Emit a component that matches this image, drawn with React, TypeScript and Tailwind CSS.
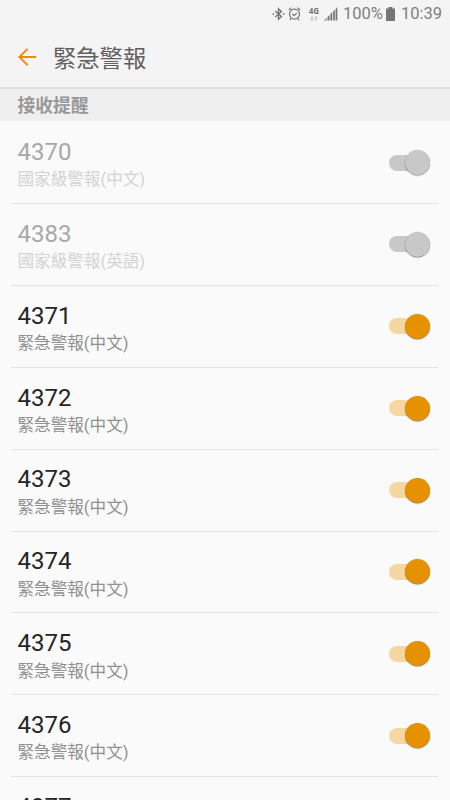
interface Channel {
    id: string;
    label: string;
    enabled: boolean;
}

const channels: Channel[] = [
    { id: '4370', label: '國家級警報(中文)', enabled: false },
    { id: '4383', label: '國家級警報(英語)', enabled: false },
    { id: '4371', label: '緊急警報(中文)', enabled: true },
    { id: '4372', label: '緊急警報(中文)', enabled: true },
    { id: '4373', label: '緊急警報(中文)', enabled: true },
    { id: '4374', label: '緊急警報(中文)', enabled: true },
    { id: '4375', label: '緊急警報(中文)', enabled: true },
    { id: '4376', label: '緊急警報(中文)', enabled: true },
    { id: '4377', label: '緊急警報(中文)', enabled: true },
];

function StatusBar() {
    return (
        <div className="flex h-7 shrink-0 items-center justify-end pr-[8px] text-[#757575]">
            <svg className="h-[14px] w-[13px]" viewBox="0 0 13 14" fill="none" stroke="currentColor" strokeWidth="1.4">
                <path d="M3.2 4 L9.4 9.6 L6.5 12.2 V1.8 L9.4 4.4 L3.2 10" />
                <path d="M0.5 7 H2.2 M10.8 7 H12.5" strokeWidth="1.5" />
            </svg>
            <svg className="ml-[3px] h-[14px] w-[13px]" viewBox="0 0 13 14" fill="none" stroke="currentColor" strokeWidth="1.2">
                <circle cx="6.5" cy="7.1" r="5" />
                <path d="M0.8 3 L3.4 0.8 M9.6 0.8 L12.2 3 M4.3 6.8 L6.2 8.6 L8.8 5.9 M3 11.3 L2.2 13.2 M10 11.3 L10.8 13.2" />
            </svg>
            <div className="ml-[7px] flex w-3 flex-col items-center">
                <span className="font-['Open_Sans',sans-serif] text-[8px] leading-[8px] font-bold">4G</span>
                <svg className="mt-px h-[5px] w-[8px]" viewBox="0 0 8 5" fill="none" stroke="#b8b8b8" strokeWidth="1">
                    <path d="M2 0 V4.3 M0.5 2.9 L2 4.4 L3.5 2.9 M6 5 V0.7 M4.5 2.1 L6 0.6 L7.5 2.1" />
                </svg>
            </div>
            <svg className="ml-[4px] h-[14px] w-[14px]" viewBox="0 0 14 14" fill="currentColor">
                <path d="M0 13.5 L2.5 11 V13.5 Z M3.5 10 L5.5 8 V13.5 H3.5 Z M6.4 7.1 L8.2 5.3 V13.5 H6.4 Z M9.1 4.4 L10.8 2.7 V13.5 H9.1 Z M11.6 1.9 L13.3 0.2 V13.5 H11.6 Z" />
            </svg>
            <span className="ml-[5px] w-[41px] text-[16.5px] leading-none whitespace-nowrap text-[#808080]">100%</span>
            <svg className="ml-[2px] h-[14px] w-[9px]" viewBox="0 0 9 14" fill="currentColor">
                <path d="M2.5 0 H6.5 V1.5 H9 V14 H0 V1.5 H2.5 Z" />
            </svg>
            <span className="ml-[6px] text-[16.5px] leading-none text-[#808080]">10:39</span>
        </div>
    );
}

function Toggle({ enabled }: { enabled: boolean }) {
    return (
        <div className={`mr-[20px] flex h-4 w-[41px] items-center justify-end rounded-full ${enabled ? 'bg-[#f5d7a2]' : 'bg-[#c8c8c8]'}`}>
            <div className={`h-[25px] w-[25px] shrink-0 rounded-full shadow-[0_0.5px_1px_rgba(0,0,0,0.55)] ${enabled ? 'bg-[#e69200]' : 'bg-[#c8c8c8]'}`} />
        </div>
    );
}

function ChannelRow({ channel }: { channel: Channel }) {
    return (
        <li className="flex h-[81.9px] shrink-0 flex-col">
            <div className="flex flex-1 items-center justify-between pl-[17.5px]">
                <div className="pt-[5px]">
                    <p className={`text-[24px] leading-7 ${channel.enabled ? 'text-[#252525]' : 'text-[#a8a8a8]'}`}>{channel.id}</p>
                    <p className={`pt-[2.4px] text-[16.6px] leading-6 font-normal ${channel.enabled ? 'text-[#8f9191]' : 'text-[#d2d4d4]'}`}>{channel.label}</p>
                </div>
                <Toggle enabled={channel.enabled} />
            </div>
            <div className="mr-[11px] ml-[11px] h-px shrink-0 bg-[#e5e5e5]" />
        </li>
    );
}

export default function App() {
    return (
        <div className="flex h-[800px] w-[450px] flex-col overflow-hidden bg-[#fafafa] font-[Roboto,'Noto_Sans_CJK_TC',sans-serif]">
            <header className="flex h-[87px] shrink-0 flex-col bg-[#f4f4f4]">
                <StatusBar />
                <div className="flex h-[58px] items-center pl-[17.5px]">
                    <svg className="h-[18px] w-[18px]" viewBox="0 0 18 18" fill="none" stroke="#f08a00" strokeWidth="1.9">
                        <path d="M18 9 H1.6 M9.6 0.8 L1.4 9 L9.6 17.2" />
                    </svg>
                    <h1 className="ml-[17.5px] pt-[3px] text-[23.3px] leading-8 text-[#606060]">緊急警報</h1>
                </div>
            </header>
            <div className="flex h-[34px] shrink-0 items-center border-t-2 border-[#dedede] bg-[#efefef] pt-px pl-[17.5px]">
                <h2 className="text-[17.8px] leading-6 font-bold text-[#989898]">接收提醒</h2>
            </div>
            <ul className="flex flex-1 flex-col overflow-hidden pt-[1.1px]">
                {channels.map((channel) => (
                    <ChannelRow key={channel.id} channel={channel} />
                ))}
            </ul>
        </div>
    );
}
